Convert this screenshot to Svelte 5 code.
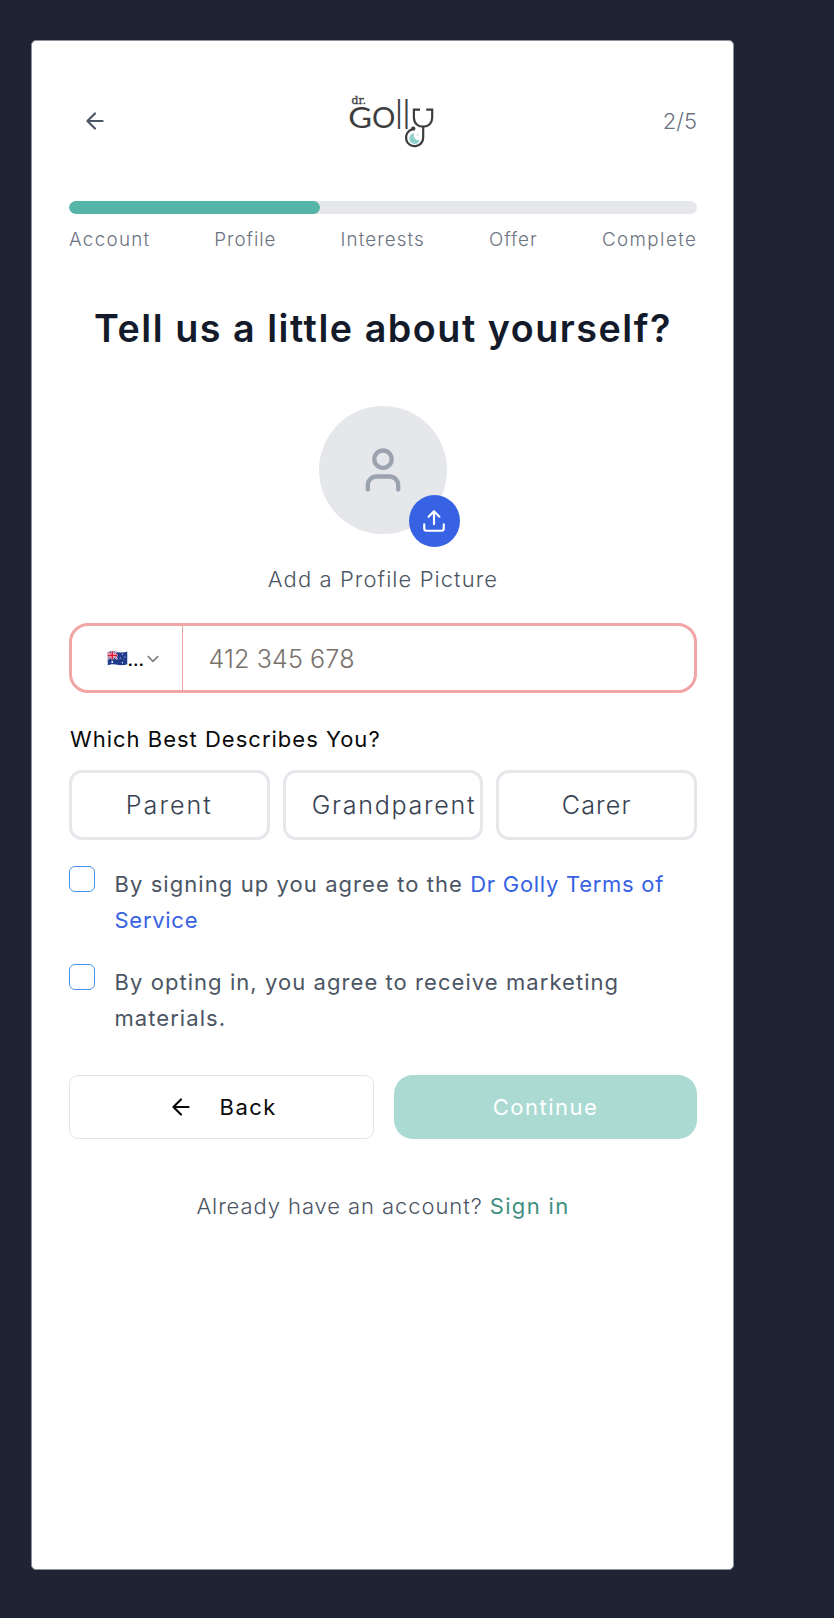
<script>
  const steps = [
    { label: 'Account', track: 1.3 },
    { label: 'Profile', track: 0.92 },
    { label: 'Interests', track: 1.1 },
    { label: 'Offer', track: 1 },
    { label: 'Complete', track: 1.42 }
  ];
  const roles = [
    { label: 'Parent', track: 2 },
    { label: 'Grandparent', track: 1.7 },
    { label: 'Carer', track: 1.1 }
  ];
  const progress = 40;
</script>

<main class="card">
  <header>
    <button class="plain back-icon" aria-label="Go back">
      <svg class="arrow" viewBox="0 0 24 24"><path d="M19 12H5M12 19l-7-7 7-7" /></svg>
    </button>
    <svg class="logo" viewBox="0 0 90 58" width="90" height="58" role="img">
      <text x="4.500" y="10.600" class="dr" textLength="14.500" lengthAdjust="spacingAndGlyphs">dr.</text>
      <text x="1.300" y="35" class="cap" textLength="23.800" lengthAdjust="spacingAndGlyphs">G</text>
      <text x="25" y="35" class="cap" textLength="23.400" lengthAdjust="spacingAndGlyphs">O</text>
      <text x="47.600" y="35.700" class="ell">l</text>
      <text x="54.900" y="35.700" class="ell">l</text>
      <g fill="none" stroke="#3d3d3d" stroke-width="2.200">
        <path d="M73 16.700H66.900V24.500C66.900 30 70.800 33.700 76.100 33.700S85.200 30 85.200 24.500V16.700H79.200" />
        <path d="M76.200 33.700V44.300A8.600 8.600 0 1 1 65 36.400" />
      </g>
      <circle cx="66.200" cy="35.600" r="2.200" fill="#3d3d3d" />
      <path d="M67.300 40.300A5.300 5.300 0 1 0 72.700 47.200A4.900 4.900 0 0 1 67.300 40.300Z" fill="#8fd0ca" />
      <circle cx="70.600" cy="42" r="0.700" fill="#8fd0ca" />
    </svg>
    <span class="count">2/5</span>
  </header>

  <div class="track"><div class="fill" style="width: {progress}%"></div></div>
  <div class="steps">
    {#each steps as s}<span style="letter-spacing: {s.track}px; margin-right: {-s.track}px">{s.label}</span>{/each}
  </div>

  <h1>Tell us a little about yourself?</h1>

  <div class="avatar">
    <svg class="user" viewBox="0 0 24 24">
      <path d="M19 21v-2a4 4 0 0 0-4-4H9a4 4 0 0 0-4 4v2" />
      <circle cx="12" cy="7" r="4" />
    </svg>
    <button class="plain badge" aria-label="Upload">
      <svg viewBox="0 0 24 24">
        <path d="M21 15v4a2 2 0 0 1-2 2H5a2 2 0 0 1-2-2v-4M17 8l-5-5-5 5M12 3v12" />
      </svg>
    </button>
  </div>
  <p class="caption">Add a Profile Picture</p>

  <div class="phone">
    <div class="country">
      <svg class="flag" viewBox="0 0 42 30">
        <defs>
          <clipPath id="wave"><path d="M1 2.500C8 -0.500 14 0.500 21 2S34 3.500 41 1V26.500C34 29.500 28 29 21 27.500S8 26 1 29Z" /></clipPath>
        </defs>
        <g clip-path="url(#wave)">
          <rect width="42" height="30" fill="#1f3b8c" />
          <path d="M0 1L21 16M21 0L0 17" stroke="#fff" stroke-width="3.400" />
          <path d="M0 1L21 16M21 0L0 17" stroke="#d8213b" stroke-width="1.600" />
          <path d="M10.500 0V17M0 8.700H21" stroke="#fff" stroke-width="5" />
          <path d="M10.500 0V17M0 8.700H21" stroke="#d8213b" stroke-width="3.400" />
          <g fill="#fff">
            <circle cx="10.500" cy="22" r="2" />
            <circle cx="31" cy="6.500" r="1.200" />
            <circle cx="26.500" cy="14" r="1.200" />
            <circle cx="36" cy="12" r="1.200" />
            <circle cx="33" cy="17" r="0.700" />
            <circle cx="31" cy="23.500" r="1.300" />
          </g>
        </g>
      </svg>
      <span class="dots">...</span>
      <svg class="chevron" viewBox="0 0 12 8"><path d="M0.800 1.200L6 6.400L11.200 1.200" /></svg>
    </div>
    <span class="number">412 345 678</span>
  </div>

  <p class="question">Which Best Describes You?</p>
  <div class="roles">
    {#each roles as r}<button class="plain role" style="letter-spacing: {r.track}px">{r.label}</button>{/each}
  </div>

  <div class="check">
    <span class="box"></span>
    <p class="terms">By signing up you agree to the <a href="#terms">Dr Golly Terms of Service</a></p>
  </div>
  <div class="check">
    <span class="box"></span>
    <p>By opting in, you agree to receive marketing materials.</p>
  </div>

  <div class="actions">
    <button class="plain back">
      <svg class="arrow dark" viewBox="0 0 24 24"><path d="M19 12H5M12 19l-7-7 7-7" /></svg>
      <span>Back</span>
    </button>
    <button class="plain continue">Continue</button>
  </div>

  <p class="signin">Already have an account? <a href="#signin">Sign in</a></p>
</main>

<style>
  :global(body) {
    background: #1e2433;
  }
  .card {
    margin: 40px 0 0 31px;
    width: 703px;
    height: 1530px;
    box-sizing: border-box;
    padding: 52px 36px 0 37px;
    background: #fff;
    border: 1px solid #8b909b;
    border-radius: 5px;
    font-family: Inter, 'Open Sans', sans-serif;
    font-size: 22px;
    font-weight: 300;
    color: #4b5563;
  }
  p,
  h1 {
    margin: 0;
  }
  a {
    text-decoration: none;
  }
  .plain {
    font: inherit;
    color: inherit;
    background: none;
    border: 0;
    padding: 0;
    box-sizing: border-box;
  }
  svg {
    display: block;
    flex: none;
    overflow: visible;
  }

  header {
    display: flex;
    align-items: center;
    justify-content: space-between;
    height: 58px;
  }
  .back-icon {
    display: flex;
    justify-content: center;
    width: 52px;
    padding-bottom: 2px;
  }
  .arrow {
    width: 26px;
    height: 26px;
    fill: none;
    stroke: #4b5563;
    stroke-width: 2;
    stroke-linecap: round;
    stroke-linejoin: round;
  }
  .arrow.dark {
    stroke: #0a0a0a;
  }
  .dr {
    font: 10.5px 'DejaVu Serif', serif;
    fill: #3d3d3d;
    stroke: #3d3d3d;
    stroke-width: 0.3px;
  }
  .cap {
    font: 400 28.5px Lato, sans-serif;
    fill: #3d3d3d;
  }
  .ell {
    font: 300 40.5px Lato, sans-serif;
    fill: #3d3d3d;
  }
  .count {
    padding-bottom: 2px;
    color: #6b7280;
  }

  .track {
    margin-top: 50px;
    height: 13px;
    border-radius: 7px;
    background: #e5e7eb;
    overflow: hidden;
  }
  .fill {
    height: 100%;
    border-radius: 7px;
    background: #55b5a6;
  }
  .steps {
    display: flex;
    justify-content: space-between;
    margin-top: 13px;
    padding-right: 1px;
    font-size: 18.8px;
    line-height: 26px;
    color: #6b7280;
  }

  h1 {
    margin-top: 52px;
    font-size: 37.7px;
    font-weight: 600;
    line-height: 46px;
    letter-spacing: 1.52px;
    text-align: center;
    white-space: nowrap;
    color: #131a29;
  }

  .avatar {
    position: relative;
    display: flex;
    align-items: center;
    justify-content: center;
    width: 128px;
    height: 128px;
    margin: 55px auto 0;
    border-radius: 50%;
    background: #e5e7eb;
  }
  .user {
    width: 52px;
    height: 52px;
    margin-right: 1px;
    fill: none;
    stroke: #9ca3af;
    stroke-width: 2;
    stroke-linecap: round;
    stroke-linejoin: round;
  }
  .badge {
    position: absolute;
    right: -13px;
    bottom: -13px;
    display: flex;
    align-items: center;
    justify-content: center;
    width: 51px;
    height: 52px;
    padding-right: 1px;
    border-radius: 50%;
    background: #3662e3;
  }
  .badge svg {
    width: 26px;
    height: 26px;
    fill: none;
    stroke: #fff;
    stroke-width: 2;
    stroke-linecap: round;
    stroke-linejoin: round;
  }
  .caption {
    margin-top: 29px;
    line-height: 32px;
    letter-spacing: 1.07px;
    text-align: center;
  }

  .phone {
    display: flex;
    height: 70px;
    box-sizing: border-box;
    margin-top: 28px;
    border: 3px solid #f1a5a5;
    border-radius: 19px;
  }
  .country {
    display: flex;
    align-items: center;
    width: 111px;
    box-sizing: border-box;
    padding-left: 34.5px;
    border-right: 1px solid #f1a5a5;
  }
  .flag {
    width: 21px;
    height: 15px;
  }
  .dots {
    width: 19px;
    line-height: 24px;
    padding-top: 3px;
    font-size: 18px;
    font-weight: 500;
    color: #000;
  }
  .chevron {
    width: 12px;
    height: 8px;
    margin: 2px 0 0 0.5px;
    fill: none;
    stroke: #808080;
    stroke-width: 1.7;
  }
  .number {
    padding-left: 25.5px;
    font-size: 25.1px;
    line-height: 66px;
    letter-spacing: 0.12px;
    color: #78716c;
  }

  .question {
    margin-top: 31px;
    padding-left: 1px;
    line-height: 30px;
    font-weight: 400;
    letter-spacing: 1px;
    color: #0a0a0a;
  }
  .roles {
    display: grid;
    grid-template-columns: repeat(3, minmax(0, 1fr));
    gap: 13px;
    margin-top: 16px;
  }
  .role {
    height: 70px;
    padding: 0 26px;
    border: 3px solid #e5e7eb;
    border-radius: 13px;
    font-size: 25.1px;
    line-height: 64px;
    text-align: center;
    white-space: nowrap;
    color: #374151;
  }

  .check {
    display: flex;
    gap: 19.5px;
    margin-top: 26px;
    line-height: 36px;
    font-weight: 400;
    letter-spacing: 1.06px;
  }
  .box {
    flex: none;
    width: 26px;
    height: 26px;
    box-sizing: border-box;
    border: 1.3px solid #4a94ee;
    border-radius: 6px;
  }
  .terms {
    letter-spacing: 1.07px;
  }
  .terms a {
    color: #3662e3;
    letter-spacing: 0.72px;
  }

  .actions {
    display: grid;
    grid-template-columns: 305px 1fr;
    gap: 20px;
    margin-top: 39px;
    font-weight: 400;
  }
  .back {
    display: flex;
    align-items: center;
    justify-content: center;
    gap: 25.5px;
    height: 64px;
    padding-left: 2px;
    border: 1px solid #e3e4e6;
    border-radius: 9px;
    color: #0a0a0a;
    letter-spacing: 1.5px;
  }
  .continue {
    height: 64px;
    border-radius: 19px;
    background: #aadad2;
    color: #fff;
    letter-spacing: 1.5px;
  }

  .signin {
    margin-top: 51px;
    line-height: 32px;
    letter-spacing: 0.92px;
    text-align: center;
  }
  .signin a {
    font-weight: 400;
    letter-spacing: 1.35px;
    color: #3e8f80;
  }
</style>
